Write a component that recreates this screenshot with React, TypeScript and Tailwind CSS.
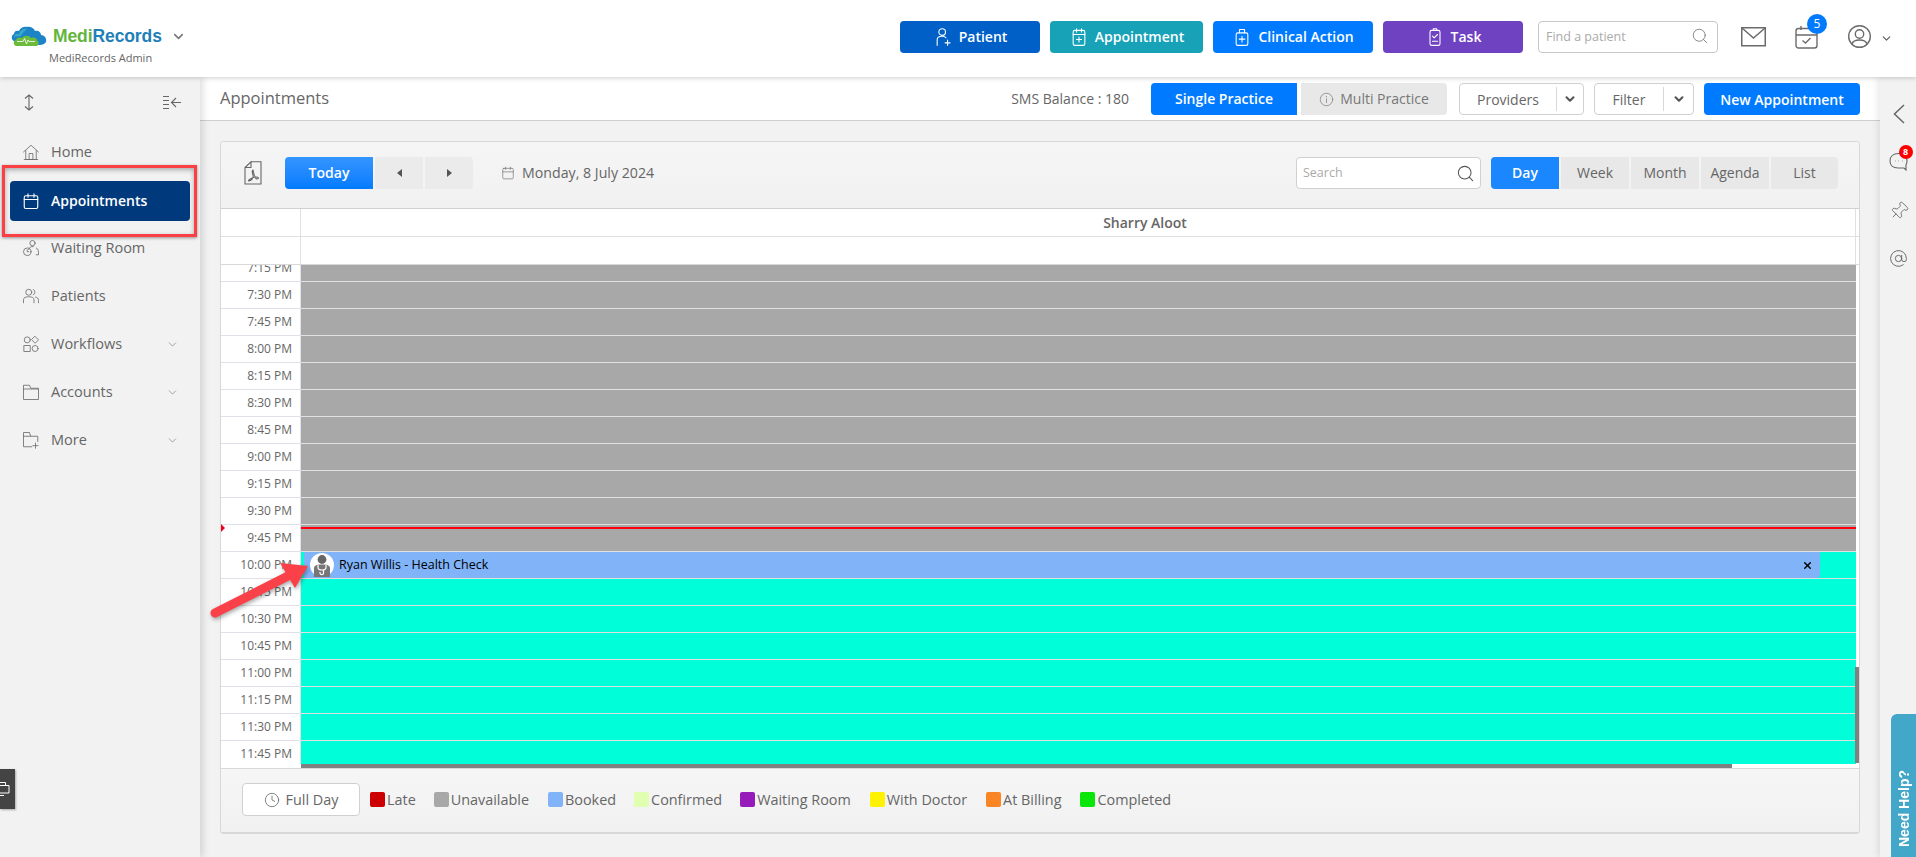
import type { ReactNode } from "react";
import { AtSign, ChevronDown, Clock, Pin, Search, X } from "lucide-react";

const times = [
    "7:15 PM", "7:30 PM", "7:45 PM",
    "8:00 PM", "8:15 PM", "8:30 PM", "8:45 PM",
    "9:00 PM", "9:15 PM", "9:30 PM", "9:45 PM",
    "10:00 PM", "10:15 PM", "10:30 PM", "10:45 PM",
    "11:00 PM", "11:15 PM", "11:30 PM", "11:45 PM",
];

const legend = [
    { label: "Late", swatch: "bg-[#cc0000]", gap: "mr-[18px]" },
    { label: "Unavailable", swatch: "bg-[#a8a8a8]", gap: "mr-[19px]" },
    { label: "Booked", swatch: "bg-[#80b3f7]", gap: "mr-[18px]" },
    { label: "Confirmed", swatch: "bg-[#e0ffb0]", gap: "mr-[18px]" },
    { label: "Waiting Room", swatch: "bg-[#951bbb]", gap: "mr-[19px]" },
    { label: "With Doctor", swatch: "bg-[#fff200]", gap: "mr-[19px]" },
    { label: "At Billing", swatch: "bg-[#f98524]", gap: "mr-[19px]" },
    { label: "Completed", swatch: "bg-[#0ae60a]", gap: "" },
];

function Ico({ size = 18, children, stroke = "#6b6b6b", width = 1.1 }: { size?: number; children: ReactNode; stroke?: string; width?: number }) {
    return (
        <svg width={size} height={size} viewBox="0 0 24 24" fill="none" stroke={stroke} strokeWidth={width} strokeLinecap="round" strokeLinejoin="round" className="shrink-0">
            {children}
        </svg>
    );
}

function Logo() {
    return (
        <svg width="36" height="20" viewBox="0 0 36 20" className="shrink-0">
            <path d="M3 15C0 14 0 9 3 8C3 5 6 4 8 5C9 2 13 0 16 1C19 0 23 2 24 5C27 4 30 6 30 9C34 9 36 13 35 16C34 18 31 19 29 19L5 19Z" fill="#1c83c6" />
            <path d="M3 11C3 8 6 7 8 8C9 4 13 2 16 3C13 5 11 8 10 10C7 10 4 11 3 11Z" fill="#36a9c9" />
            <path d="M5 20C2 19 2 15 5 14C6 11 9 11 11 12C13 9 18 9 20 12C23 11 26 12 26 14.500C28.500 15 28 19 26 20Z" fill="#6cbb3c" />
            <path d="M6 15.500H12L13.500 12.500L15.500 18L17 14L18 15.500H24" fill="none" stroke="#fff" strokeWidth="0.8" />
        </svg>
    );
}

function NavItem({ icon, label, caret }: { icon: ReactNode; label: string; caret?: boolean }) {
    return (
        <div className="flex h-12 items-center pl-[22px] pr-[21px] text-[14.5px] font-medium text-[#666]">
            <span className="flex w-[29px] shrink-0">{icon}</span>
            <span>{label}</span>
            {caret && <ChevronDown size={13} strokeWidth={1.2} className="ml-auto text-[#777]" />}
        </div>
    );
}

function ActionButton({ icon, label, color, width }: { icon: ReactNode; label: string; color: string; width: string }) {
    return (
        <div className={`flex h-8 items-center justify-center gap-[6px] rounded text-sm font-semibold text-white ${color} ${width}`}>
            {icon}
            <span>{label}</span>
        </div>
    );
}

function SplitButton({ label, width, divider }: { label: string; width: string; divider: string }) {
    return (
        <div className={`flex h-8 items-center rounded border border-[#d0d0d0] bg-white text-sm font-medium text-[#666] ${width}`}>
            <span className={`flex h-[24px] items-center justify-center border-r border-[#d8d8d8] pt-[2px] ${divider}`}>{label}</span>
            <span className="flex flex-1 justify-center">
                <ChevronDown size={14} strokeWidth={3.5} className="text-[#555]" />
            </span>
        </div>
    );
}

function Triangle({ left }: { left?: boolean }) {
    return (
        <svg width="5" height="8" viewBox="0 0 5 8">
            <path d={left ? "M5 0V8L0 4Z" : "M0 0V8L5 4Z"} fill="#555" />
        </svg>
    );
}

function DoctorAvatar() {
    return (
        <svg width="24" height="24" viewBox="0 0 24 24" className="shrink-0">
            <circle cx="12" cy="12" r="12" fill="#fff" />
            <circle cx="12" cy="6.500" r="4.400" fill="#666" />
            <path d="M4 24V15C4 13 7 11.500 9 11.500H15C17 11.500 20 13 20 15V24Z" fill="#777" />
            <path d="M8 11.500V14.500C8 16.500 9.500 17 12 17C14.500 17 16 16.500 16 14.500V11.500" fill="none" stroke="#fff" strokeWidth="1.2" />
            <path d="M13.500 17V20.500C13.500 22 10 22 10 20V19" fill="none" stroke="#fff" strokeWidth="1.2" />
        </svg>
    );
}

function TimeRow({ time, index }: { time: string; index: number }) {
    const unavailable = index < 11;
    return (
        <div className="flex h-[27px] shrink-0">
            <div className="flex w-[80px] shrink-0 items-center justify-end border-r border-b border-[#e0e0e8] bg-white pr-2 text-xs text-[#666]">
                {time}
            </div>
            <div className={`flex flex-1 border-b border-[#e0e0e0] ${unavailable ? "bg-[#a8a8a8]" : "bg-[#00ffd8]"}`}>
                {time === "10:00 PM" && (
                    <div className="ml-[3px] flex h-[26px] w-[1516px] items-center rounded-br bg-[#80b3f7] pl-[6px] pr-[7px] text-[12.5px] text-black">
                        <DoctorAvatar />
                        <span className="ml-[5px]">Ryan Willis - Health Check</span>
                        <X size={11} strokeWidth={3} className="ml-auto" />
                    </div>
                )}
            </div>
        </div>
    );
}

export default function App() {
    return (
        <div className="relative flex h-[857px] w-[1916px] flex-col overflow-hidden bg-[#f2f2f2] font-['Open_Sans',sans-serif]">
            <header className="z-20 flex h-[77px] shrink-0 items-start bg-white pr-[23px] shadow-[0_1px_5px_rgba(0,0,0,0.2)]">
                <div className="pl-[11px] pt-[26px]">
                    <div className="flex items-center">
                        <Logo />
                        <span className="ml-[6px] font-['Liberation_Sans',sans-serif] text-[17.5px] leading-5 font-bold tracking-[-0.1px]">
                            <span className="text-[#64b53e]">Medi</span>
                            <span className="text-[#1f7fb8]">Records</span>
                        </span>
                        <ChevronDown size={15} strokeWidth={2.5} className="ml-[9px] mt-[1px] text-[#777]" />
                    </div>
                    <div className="mt-[4px] pl-[38px] text-[11px] leading-4 text-[#666]">MediRecords Admin</div>
                </div>

                <div className="ml-auto flex items-center gap-[10px] pt-[21px]">
                    <ActionButton
                        color="bg-[#0060c8]"
                        width="w-[140px]"
                        label="Patient"
                        icon={
                            <Ico size={20} stroke="#fff" width={1.3}>
                                <circle cx="11" cy="6" r="4" />
                                <path d="M5 22V15C5 12 8 11 11 11C13 11 15 12 15.500 13" />
                                <path d="M17.500 15.500V22M14.500 19H20.500" />
                            </Ico>
                        }
                    />
                    <ActionButton
                        color="bg-[#17a2b8]"
                        width="w-[153px]"
                        label="Appointment"
                        icon={
                            <Ico size={20} stroke="#fff" width={1.3}>
                                <rect x="5" y="4" width="14" height="18" rx="2" />
                                <path d="M9 2V6M15 2V6M5 9H19M12 12V18M9 15H15" />
                            </Ico>
                        }
                    />
                    <ActionButton
                        color="bg-[#007bff]"
                        width="w-[160px]"
                        label="Clinical Action"
                        icon={
                            <Ico size={20} stroke="#fff" width={1.3}>
                                <rect x="5" y="7" width="14" height="15" rx="2" />
                                <path d="M9 7V3H15V7M12 11V18M8.500 14.500H15.500" />
                            </Ico>
                        }
                    />
                    <ActionButton
                        color="bg-[#6f42c1]"
                        width="w-[140px]"
                        label="Task"
                        icon={
                            <Ico size={20} stroke="#fff" width={1.3}>
                                <rect x="6" y="4" width="12" height="18" rx="2" />
                                <path d="M10 4V2H14V4M9 11L11 13L15 9M9 17H15" />
                            </Ico>
                        }
                    />
                    <div className="ml-[5px] flex h-8 w-[180px] items-center rounded border border-[#c8c8c8] bg-white pl-[7px] pr-[8px]">
                        <input
                            readOnly
                            placeholder="Find a patient"
                            className="w-full bg-transparent text-[12.5px] outline-none placeholder:text-[#aaa]"
                        />
                        <Search size={18} strokeWidth={1} className="mb-[3px] shrink-0 text-[#666]" />
                    </div>
                </div>

                <div className="ml-[23px] pt-[25px]">
                    <svg width="25" height="22" viewBox="0 0 25 22" fill="none" stroke="#6b6b6b" strokeWidth="1.5">
                        <rect x="0.750" y="2.750" width="23.500" height="18" />
                        <path d="M1 3L12.500 13L24 3" />
                    </svg>
                </div>
                <div className="relative ml-[29px] pt-[25px]">
                    <svg width="23" height="24" viewBox="0 0 23 24" fill="none" stroke="#6b6b6b" strokeWidth="1.4">
                        <rect x="1" y="3.500" width="21" height="19.500" rx="2.500" />
                        <path d="M1 10H22M6 1V5M17 1V5M7.500 15.500L10.500 18L15.500 13" />
                    </svg>
                    <span className="absolute left-[12px] top-[14px] flex h-5 w-5 items-center justify-center rounded-full bg-[#007bff] text-xs font-medium text-white">
                        5
                    </span>
                </div>
                <div className="ml-[30px] pt-[25px]">
                    <svg width="23" height="23" viewBox="0 0 23 23" fill="none" stroke="#6b6b6b" strokeWidth="1.4">
                        <circle cx="11.500" cy="11.500" r="10.800" />
                        <circle cx="11.500" cy="9" r="4.200" />
                        <path d="M4 19C5 15.500 8 15 11.500 15C15 15 18 15.500 19 19" />
                    </svg>
                </div>
                <ChevronDown size={13} strokeWidth={2.5} className="ml-[9px] mt-[32px] text-[#666]" />
            </header>

            <div className="flex min-h-0 flex-1">
                <aside className="z-10 w-[200px] shrink-0 bg-[#f2f2f2] shadow-[3px_0_7px_rgba(0,0,0,0.13)]">
                    <div className="flex h-[51px] items-center justify-between pl-[23px] pr-[19px]">
                        <svg width="12" height="17" viewBox="0 0 12 17" fill="none" stroke="#666" strokeWidth="1.1">
                            <path d="M6 1V16M2 4.500L6 1L10 4.500M2 12.500L6 16L10 12.500" />
                        </svg>
                        <svg width="18" height="15" viewBox="0 0 18 15" fill="none" stroke="#666" strokeWidth="1.1">
                            <path d="M0 1.500H6M0 5.500H6M0 9.500H6M0 13.500H6M18 7.500H9M13 3L8.500 7.500L13 12" />
                        </svg>
                    </div>
                    <NavItem
                        label="Home"
                        icon={
                            <Ico>
                                <path d="M2 12L12 3L22 12M5 10V22H19V10M9.500 22V14H14.500V22M3 22H21" />
                            </Ico>
                        }
                    />
                    <div className="flex h-12 items-center px-[10px] pt-[2px]">
                        <div className="flex h-10 w-[180px] items-center rounded-[4px] bg-[#003a7c] pl-[12px] text-sm font-semibold text-white">
                            <span className="flex w-[29px] shrink-0">
                                <Ico stroke="#fff" width={1.5}>
                                    <rect x="3" y="5" width="18" height="17" rx="2" />
                                    <path d="M3 10H21M8 2.500V7M16 2.500V7" />
                                </Ico>
                            </span>
                            Appointments
                        </div>
                    </div>
                    <NavItem
                        label="Waiting Room"
                        icon={
                            <Ico>
                                <circle cx="14" cy="5.500" r="3.500" />
                                <path d="M19 12C22 13 22 16 22 21H19M9 14C9 11 12 10 15 10" />
                                <circle cx="7" cy="17" r="5" />
                                <path d="M7 14.500V17H9" />
                            </Ico>
                        }
                    />
                    <NavItem
                        label="Patients"
                        icon={
                            <Ico>
                                <circle cx="9" cy="7" r="4" />
                                <path d="M2 21V17C2 14 5 13 9 13C13 13 16 14 16 17V21" />
                                <path d="M15 3.500C18 3.500 18 10 15 10.500M18 13.500C21 14 22 15 22 18V21" />
                            </Ico>
                        }
                    />
                    <NavItem
                        caret
                        label="Workflows"
                        icon={
                            <Ico>
                                <circle cx="7" cy="6.500" r="4" />
                                <path d="M17.500 2L22 6.500L17.500 11L13 6.500Z" />
                                <rect x="3" y="14" width="8" height="8" />
                                <circle cx="17.500" cy="18" r="4" />
                            </Ico>
                        }
                    />
                    <NavItem
                        caret
                        label="Accounts"
                        icon={
                            <Ico>
                                <path d="M2 8V3H10L11.500 7H22V22H2V8H22" />
                            </Ico>
                        }
                    />
                    <NavItem
                        caret
                        label="More"
                        icon={
                            <Ico>
                                <path d="M13 21H2V2H10L11.500 7H21V14M2 7H11.500M18 16V23M14.500 19.500H21.500" />
                            </Ico>
                        }
                    />
                </aside>

                <main className="flex min-w-0 flex-1 flex-col">
                    <div className="flex h-[44px] shrink-0 items-start justify-between border-b border-[#cfcfcf] bg-white pl-5 pr-5 pt-[6px]">
                        <h1 className="mt-[3px] text-[16.5px] font-medium text-[#666]">Appointments</h1>
                        <div className="flex items-center">
                            <span className="mr-[22px] text-sm text-[#666]">SMS Balance : 180</span>
                            <div className="flex h-8 w-[146px] items-center justify-center rounded-l bg-[#007bff] text-sm font-semibold text-white">
                                Single Practice
                            </div>
                            <div className="ml-1 flex h-8 w-[146px] items-center justify-center gap-[6px] rounded-r bg-[#e8e8e8] text-sm font-medium text-[#777]">
                                <Ico size={15} stroke="#777">
                                    <circle cx="12" cy="12" r="10" />
                                    <path d="M12 11V17M12 7V8" />
                                </Ico>
                                Multi Practice
                            </div>
                            <div className="ml-3">
                                <SplitButton label="Providers" width="w-[125px]" divider="w-[97px]" />
                            </div>
                            <div className="ml-[10px]">
                                <SplitButton label="Filter" width="w-[100px]" divider="w-[69px]" />
                            </div>
                            <div className="ml-[10px] flex h-8 w-[156px] items-center justify-center rounded bg-[#007bff] pt-[2px] text-sm font-semibold text-white">
                                New Appointment
                            </div>
                        </div>
                    </div>

                    <div className="min-h-0 flex-1 px-5 pt-5">
                        <section className="flex h-[693px] flex-col overflow-hidden rounded border border-b-2 border-[#d8d8d8] bg-[#f2f2f2]">
                            <div className="flex h-[67px] shrink-0 items-center border-b border-[#d0d0d0] bg-gradient-to-b from-[#f5f5f5] to-[#f1f1f1] pb-[4px] pl-[23px] pr-[21px]">
                                <svg width="18" height="24" viewBox="0 0 18 24" fill="none" stroke="#666" strokeWidth="1.1">
                                    <path d="M7 0.750H17V23H1V6.500L7 0.750V6.500H1" />
                                    <path d="M9 9C8 9 8 11 9 14C10 17 7 20 5 20C3 20 8 16 12 16C15 16 15 18 13 18C11 18 10 14 9 9Z" />
                                </svg>
                                <div className="ml-[23px] flex h-8 w-[88px] items-center justify-center rounded-l bg-gradient-to-b from-[#3395ff] to-[#007bff] text-sm font-semibold text-white">
                                    Today
                                </div>
                                <div className="ml-[2px] flex h-8 w-[48px] items-center justify-center rounded-l-sm bg-[#ebebeb]">
                                    <Triangle left />
                                </div>
                                <div className="ml-[2px] flex h-8 w-[48px] items-center justify-center rounded-r bg-[#ebebeb]">
                                    <Triangle />
                                </div>
                                <div className="ml-[28px]">
                                    <Ico size={14}>
                                        <rect x="3" y="4" width="18" height="18" rx="2" />
                                        <path d="M3 10H21M8 2V6M16 2V6" />
                                    </Ico>
                                </div>
                                <span className="ml-[7px] text-[14.2px] font-medium text-[#666]">Monday, 8 July 2024</span>

                                <div className="ml-auto flex h-8 w-[185px] items-center rounded border border-[#d0d0d0] bg-white pl-[6px] pr-[5px]">
                                    <input
                                        readOnly
                                        placeholder="Search"
                                        className="w-full bg-transparent text-[12.5px] outline-none placeholder:text-[#aaa]"
                                    />
                                    <Search size={19} strokeWidth={1.3} className="shrink-0 text-[#555]" />
                                </div>
                                <div className="ml-[10px] flex h-8 text-sm font-medium text-[#666]">
                                    <div className="flex w-[68px] items-center justify-center rounded-l bg-[#1a87ff] font-semibold text-white">Day</div>
                                    <div className="ml-[2px] flex w-[68px] items-center justify-center bg-[#e8e8e8]">Week</div>
                                    <div className="ml-[2px] flex w-[68px] items-center justify-center bg-[#e8e8e8]">Month</div>
                                    <div className="ml-[2px] flex w-[68px] items-center justify-center bg-[#e8e8e8]">Agenda</div>
                                    <div className="ml-[2px] flex w-[67px] items-center justify-center rounded-r bg-[#e8e8e8]">List</div>
                                </div>
                            </div>

                            <div className="flex h-[28px] shrink-0 border-b border-[#e0e0e0] bg-white">
                                <div className="w-[80px] shrink-0 border-r border-[#e0e0e0]" />
                                <div className="flex w-[1555px] items-center justify-center border-r border-[#e0e0e0] pl-[134px] pt-[1px] text-sm font-semibold text-[#666]">
                                    Sharry Aloot
                                </div>
                            </div>
                            <div className="flex h-[28px] shrink-0 border-b border-[#d8d8d8] bg-white">
                                <div className="w-[80px] shrink-0 border-r border-[#e0e0e0]" />
                                <div className="w-[1555px] border-r border-[#e0e0e0]" />
                            </div>

                            <div className="relative h-[503px] shrink-0 bg-white">
                                <div className="h-[499px] w-[1635px] overflow-hidden">
                                    <div className="flex h-[503px] flex-col justify-end">
                                        {times.map((time, index) => (
                                            <TimeRow key={time} time={time} index={index} />
                                        ))}
                                    </div>
                                </div>
                                <div className="ml-[80px] h-[4px] w-[1431px] bg-[#808080]" />
                                <div className="absolute left-0 top-[259px] h-[8px] w-[4px] bg-[#f0001c] [clip-path:polygon(0_0,100%_50%,0_100%)]" />
                                <div className="absolute left-[80px] top-[262px] h-[2px] w-[1555px] bg-[#ff0010]" />
                                <div className="absolute bottom-[5px] right-0 h-[96px] w-[4px] bg-[#808080]" />
                            </div>

                            <div className="flex flex-1 items-center border-t border-[#d8d8d8] bg-gradient-to-b from-[#f6f6f6] to-[#f1f1f1] pb-[2px] pl-[21px] text-[14.4px] font-medium text-[#666]">
                                <div className="mr-[10px] flex h-[33px] w-[118px] items-center justify-center gap-[6px] rounded border border-[#d0d0d0] bg-white">
                                    <Clock size={16} strokeWidth={1.2} />
                                    Full Day
                                </div>
                                {legend.map((item) => (
                                    <div key={item.label} className={`mt-[1px] flex items-center gap-[2px] ${item.gap}`}>
                                        <span className={`h-[15px] w-[15px] rounded-[2px] ${item.swatch}`} />
                                        <span>{item.label}</span>
                                    </div>
                                ))}
                            </div>
                        </section>
                    </div>
                </main>

                <div className="z-10 flex w-[36px] shrink-0 flex-col items-center bg-[#f2f2f2] pl-[1px] pt-[27px] text-[#666] shadow-[-3px_0_6px_rgba(0,0,0,0.08)]">
                    <svg width="12" height="20" viewBox="0 0 12 20" fill="none" stroke="#666" strokeWidth="1.5">
                        <path d="M11 1L1.500 10L11 19" />
                    </svg>
                    <div className="relative mt-[27px]">
                        <svg width="20" height="20" viewBox="0 0 20 20" fill="none" stroke="#666" strokeWidth="1.1">
                            <path d="M15 17H9C4 17 1 14.500 1 10C1 5.500 4 2.500 9.500 2.500C15 2.500 18 5.500 18 10C18 12 17.500 13 17 14V19Z" />
                            <path d="M6 10H6.500M9.500 10H10M13 10H13.500" />
                        </svg>
                        <span className="absolute -right-[4px] -top-[6px] flex h-[14px] w-[14px] items-center justify-center rounded-full bg-[#f00] text-[9px] font-bold text-white">
                            8
                        </span>
                    </div>
                    <Pin size={20} strokeWidth={1} className="mt-[30px] rotate-45" />
                    <AtSign size={19} strokeWidth={1.2} className="mt-[28px]" />
                </div>
            </div>

            <div className="pointer-events-none absolute left-[2px] top-[165px] z-30 h-[72px] w-[195px] border-[3px] border-[#fb4045] shadow-[0_1px_3px_rgba(0,0,0,0.4),inset_0_2px_5px_rgba(0,0,0,0.3)]" />

            <svg width="120" height="70" viewBox="0 0 120 70" className="pointer-events-none absolute left-[205px] top-[555px] z-30 drop-shadow-[1px_2px_2px_rgba(0,0,0,0.35)]">
                <path d="M10 58L85 20" stroke="#fa4048" strokeWidth="9" strokeLinecap="round" />
                <path d="M103 11L75 8L90 33Z" fill="#fa4048" />
            </svg>

            <div className="absolute bottom-[48px] left-0 z-30 flex h-[40px] w-[15px] items-center bg-[#444] shadow-[1px_1px_2px_rgba(0,0,0,0.3)]">
                <svg width="10" height="16" viewBox="0 0 10 16" fill="none" stroke="#fff" strokeWidth="1">
                    <path d="M0 1.500H5.500V4.500M0 4.500H9V12H0M0 14.500H4" />
                </svg>
            </div>

            <div className="absolute bottom-0 right-0 z-30 flex h-[143px] w-[25px] items-end justify-center rounded-tl-[6px] bg-[#42a7c8] pb-[10px]">
                <span className="rotate-180 font-['Liberation_Sans',sans-serif] text-sm leading-none font-bold text-white [writing-mode:vertical-rl]">
                    Need Help?
                </span>
            </div>
        </div>
    );
}
